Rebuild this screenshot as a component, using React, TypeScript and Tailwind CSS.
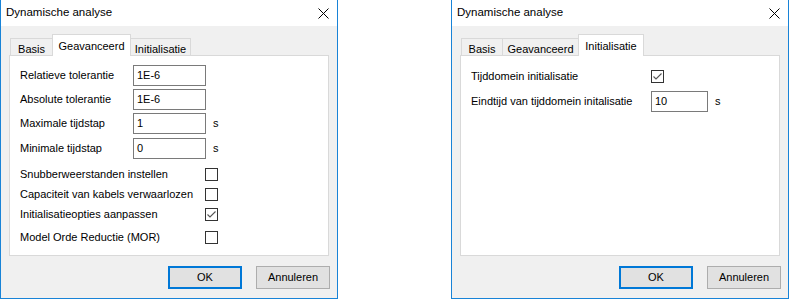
import React from "react";

const FONT = { fontFamily: '"Liberation Sans", Arial, sans-serif' };

type Tab = { label: string; width: string };

const CloseIcon = () => (
  <svg width="11" height="11" viewBox="0 0 11 11" className="block">
    <path d="M0.5 0.5 L10.5 10.5 M10.5 0.5 L0.5 10.5" stroke="#000" strokeWidth="1" fill="none" />
  </svg>
);

const Checkbox = ({ checked = false }: { checked?: boolean }) => (
  <div className="w-[13px] h-[13px] border border-[#333333] bg-white shrink-0 flex items-center justify-center">
    {checked && (
      <svg width="11" height="11" viewBox="0 0 11 11" className="block">
        <polyline points="1.5,5.5 4,8 9.5,2.5" stroke="#555555" strokeWidth="1.1" fill="none" />
      </svg>
    )}
  </div>
);

const TextBox = ({ value, className }: { value: string; className: string }) => (
  <div className={`h-[21px] border border-[#7a7a7a] bg-white flex items-center px-[3px] text-[11px] text-black ${className}`}>
    {value}
  </div>
);

const Button = ({ label, primary = false }: { label: string; primary?: boolean }) => (
  <div
    className={`w-[74px] h-[23px] bg-[#e1e1e1] flex items-center justify-center text-[11px] text-black ${
      primary ? "border-2 border-[#0078d7]" : "border border-[#adadad]"
    }`}
  >
    {label}
  </div>
);

const Dialog = ({
  tabs,
  active,
  children,
}: {
  tabs: Tab[];
  active: number;
  children: React.ReactNode;
}) => (
  <div className="w-[338px] h-[299px] bg-[#f0f0f0] border-x border-b border-[#1883d7] flex flex-col whitespace-nowrap" style={FONT}>
    <div className="h-[26px] bg-white flex items-center justify-between pl-[5px] pr-[8px] shrink-0">
      <span className="text-[11.5px] text-black">Dynamische analyse</span>
      <CloseIcon />
    </div>

    <div className="px-[8px] pt-[8px]">
      <div className="flex items-end h-[21px] pl-[1px]">
        {tabs.map((t, i) =>
          i === active ? (
            <div
              key={t.label}
              className={`relative z-10 h-[22px] -mb-px bg-white border-x border-t border-[#d9d9d9] flex justify-center pt-[3px] text-[11px] text-black ${t.width} ${i > 0 ? "-ml-px" : ""}`}
            >
              {t.label}
            </div>
          ) : (
            <div
              key={t.label}
              className={`h-[17px] bg-[#f0f0f0] border-x border-t border-[#d9d9d9] flex justify-center pt-[2px] text-[11px] text-black ${t.width} ${i > 0 ? "-ml-px" : ""}`}
            >
              {t.label}
            </div>
          )
        )}
      </div>
      <div className="h-[201px] bg-white border border-[#d9d9d9] pl-[10px]">{children}</div>
    </div>

    <div className="flex justify-end gap-[14px] pr-[7px] mt-[10px]">
      <Button label="OK" primary />
      <Button label="Annuleren" />
    </div>
  </div>
);

const InputRow = ({ label, value, unit, className = "" }: { label: string; value: string; unit?: boolean; className?: string }) => (
  <div className={`flex items-center h-[21px] text-[11px] text-black ${className}`}>
    <span className="w-[113px]">{label}</span>
    <TextBox value={value} className="w-[73px]" />
    {unit && <span className="ml-[7px]">s</span>}
  </div>
);

const CheckRow = ({ label, checked, className = "" }: { label: string; checked?: boolean; className?: string }) => (
  <div className={`flex items-center h-[13px] text-[11px] text-black ${className}`}>
    <span className="w-[185px]">{label}</span>
    <Checkbox checked={checked} />
  </div>
);

export default function App() {
  return (
    <div className="w-[789px] h-[299px] bg-white flex justify-between">
      <Dialog
        active={1}
        tabs={[
          { label: "Basis", width: "w-[43px]" },
          { label: "Geavanceerd", width: "w-[79px]" },
          { label: "Initialisatie", width: "w-[61px]" },
        ]}
      >
        <div className="flex flex-col pt-[9px]">
          <InputRow label="Relatieve tolerantie" value="1E-6" />
          <InputRow label="Absolute tolerantie" value="1E-6" className="mt-[3px]" />
          <InputRow label="Maximale tijdstap" value="1" unit className="mt-[3px]" />
          <InputRow label="Minimale tijdstap" value="0" unit className="mt-[4px]" />
          <CheckRow label="Snubberweerstanden instellen" className="mt-[9px]" />
          <CheckRow label="Capaciteit van kabels verwaarlozen" className="mt-[7px]" />
          <CheckRow label="Initialisatieopties aanpassen" checked className="mt-[7px]" />
          <CheckRow label="Model Orde Reductie (MOR)" className="mt-[10px]" />
        </div>
      </Dialog>

      <Dialog
        active={2}
        tabs={[
          { label: "Basis", width: "w-[42px]" },
          { label: "Geavanceerd", width: "w-[77px]" },
          { label: "Initialisatie", width: "w-[66px]" },
        ]}
      >
        <div className="flex flex-col pt-[14px] text-[11px] text-black">
          <div className="flex items-center h-[13px]">
            <span className="w-[180px]">Tijddomein initialisatie</span>
            <Checkbox checked />
          </div>
          <div className="flex items-center h-[21px] mt-[8px]">
            <span className="w-[180px]">Eindtijd van tijddomein initalisatie</span>
            <TextBox value="10" className="w-[57px]" />
            <span className="ml-[7px]">s</span>
          </div>
        </div>
      </Dialog>
    </div>
  );
}
